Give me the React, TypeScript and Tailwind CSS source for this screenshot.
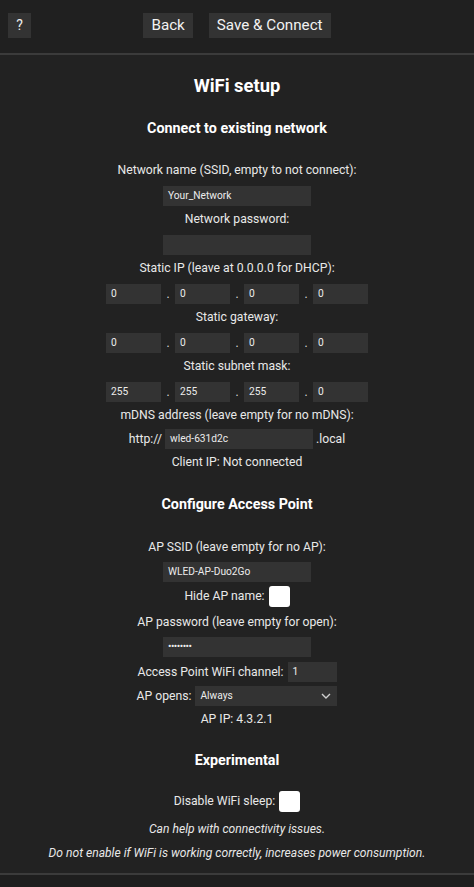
import React from 'react'

const Label = ({ children, className = '' }: { children: React.ReactNode; className?: string }) => (
  <div className={`h-[22px] leading-[22px] text-[12.2px] text-[#e8e8e8] ${className}`}>{children}</div>
)

const Field = ({ value, className = 'w-[148px]' }: { value?: string; className?: string }) => (
  <div className={`h-[20px] bg-[#333333] pl-[5px] text-left text-[10.2px] leading-[20px] text-[#ececec] ${className}`}>
    {value}
  </div>
)

const IpRow = ({ parts }: { parts: string[] }) => (
  <div className="mt-[5px] flex items-center">
    {parts.map((p, i) => (
      <React.Fragment key={i}>
        {i > 0 && <span className="w-[14px] text-center text-[12px] leading-[20px] text-[#ddd]">.</span>}
        <Field value={p} className="w-[55px]" />
      </React.Fragment>
    ))}
  </div>
)

const Checkbox = () => <div className="ml-[4px] h-[21px] w-[21px] rounded-[3px] bg-white" />

const Btn = ({ children }: { children: React.ReactNode }) => (
  <button className="h-[25px] bg-[#333333] px-[8px] text-[15.2px] leading-[25px] text-[#f2f2f2]">{children}</button>
)

export default function App() {
  return (
    <div className="min-h-screen bg-[#222222] font-['Roboto',sans-serif] text-center">
      <header className="grid h-[55px] grid-cols-[1fr_auto_1fr] items-center border-b-2 border-[#3b3b3b] bg-[#202020] pb-[2px]">
        <div className="pl-[8px] text-left">
          <button className="h-[25px] w-[23px] bg-[#333333] text-[14px] leading-[25px] text-[#eee]">?</button>
        </div>
        <div className="flex gap-[16px]">
          <Btn>Back</Btn>
          <Btn>Save &amp; Connect</Btn>
        </div>
        <div />
      </header>

      <main className="flex flex-col items-center">
        <h1 className="mt-[19px] h-[24px] text-[18.4px] font-bold leading-[24px] text-white">WiFi setup</h1>
        <h2 className="mt-[20px] h-[20px] text-[14.3px] font-bold leading-[20px] text-white">Connect to existing network</h2>

        <Label className="mt-[21px]">Network name (SSID, empty to not connect):</Label>
        <div className="mt-[5px]"><Field value="Your_Network" /></div>
        <Label className="mt-[2px]">Network password:</Label>
        <div className="mt-[5px]"><Field /></div>
        <Label className="mt-[2px]">Static IP (leave at 0.0.0.0 for DHCP):</Label>
        <IpRow parts={['0', '0', '0', '0']} />
        <Label className="mt-[2px]">Static gateway:</Label>
        <IpRow parts={['0', '0', '0', '0']} />
        <Label className="mt-[2px]">Static subnet mask:</Label>
        <IpRow parts={['255', '255', '255', '0']} />
        <Label className="mt-[2px]">mDNS address (leave empty for no mDNS):</Label>
        <div className="mt-[3px] flex items-center text-[12.2px] text-[#e8e8e8]">
          <span className="mr-[3px]">http://</span>
          <Field value="wled-631d2c" />
          <span className="ml-[3px]">.local</span>
        </div>
        <Label className="mt-[2px]">Client IP: Not connected</Label>

        <h2 className="mt-[21px] h-[20px] text-[14.3px] font-bold leading-[20px] text-white">Configure Access Point</h2>

        <Label className="mt-[22px]">AP SSID (leave empty for no AP):</Label>
        <div className="mt-[4px]"><Field value="WLED-AP-Duo2Go" /></div>
        <div className="mt-[3px] flex h-[22px] items-center text-[12.2px] text-[#e8e8e8]">
          <span>Hide AP name:</span>
          <Checkbox />
        </div>
        <Label className="mt-[4px]">AP password (leave empty for open):</Label>
        <div className="mt-[4px]"><Field value="••••••••" className="w-[148px] text-[7px] tracking-[-0.5px]" /></div>
        <div className="mt-[5px] flex items-center text-[12.2px] text-[#e8e8e8]">
          <span className="mr-[4px]">Access Point WiFi channel:</span>
          <Field value="1" className="w-[49px]" />
        </div>
        <div className="mt-[4px] flex items-center text-[12.2px] text-[#e8e8e8]">
          <span className="mr-[4px]">AP opens:</span>
          <div className="flex h-[20px] w-[142px] items-center justify-between bg-[#333333] pl-[5px] pr-[6px] text-[10.2px] text-[#ececec]">
            <span>Always</span>
            <svg width="10" height="6" viewBox="0 0 10 6" fill="none" stroke="#cfcfcf" strokeWidth="1.4">
              <path d="M1 1l4 4 4-4" />
            </svg>
          </div>
        </div>
        <Label className="mt-[2px]">AP IP: 4.3.2.1</Label>

        <h2 className="mt-[20px] h-[20px] text-[14.3px] font-bold leading-[20px] text-white">Experimental</h2>
        <div className="mt-[20px] flex h-[22px] items-center text-[12.2px] text-[#e8e8e8]">
          <span>Disable WiFi sleep:</span>
          <Checkbox />
        </div>
        <div className="mt-[7px] h-[20px] text-[12.1px] italic leading-[20px] text-[#e8e8e8]">Can help with connectivity issues.</div>
        <div className="mt-[4px] h-[20px] text-[12.1px] italic leading-[20px] text-[#e8e8e8]">
          Do not enable if WiFi is working correctly, increases power consumption.
        </div>
      </main>

      <footer className="mt-[10px] h-[40px] border-t-2 border-[#3b3b3b] bg-[#1e1e1e]" />
    </div>
  )
}
